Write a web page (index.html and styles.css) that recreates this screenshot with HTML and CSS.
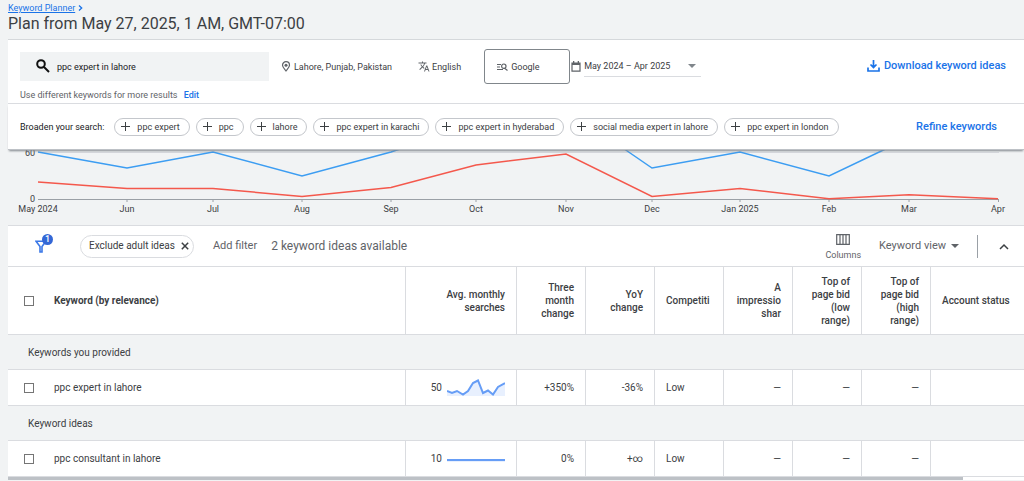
FILE: index.html
```html
<!DOCTYPE html>
<html lang="en">
<head>
<meta charset="utf-8">
<title>Keyword Planner</title>
<link rel="stylesheet" href="styles.css">
</head>
<body>
<header class="page-header">
  <nav class="breadcrumb"><a href="#">Keyword Planner</a><svg width="5" height="8" viewBox="0 0 5 8"><path d="M1 1.500 3.700 4 1 6.500"/></svg></nav>
  <h1>Plan from May 27, 2025, 1 AM, GMT-07:00</h1>
</header>
<main>
  <section class="search-panel">
    <div class="search-row">
      <label class="search-box">
        <svg width="14" height="14" viewBox="0 0 14 14"><circle cx="5" cy="5" r="3.8"/><path d="m8 8 5 5"/></svg>
        <input type="text" value="ppc expert in lahore" aria-label="Keywords">
      </label>
      <button class="setting location"><svg width="10" height="11" viewBox="0 0 10 11"><path class="line" d="M5 10C3 7.500 1.500 6 1.500 4.200a3.500 3.500 0 0 1 7 0C8.500 6 7 7.500 5 10Z"/><circle cx="5" cy="4.200" r="1.500"/></svg>Lahore, Punjab, Pakistan</button>
      <button class="setting language"><svg width="12" height="11" viewBox="0 0 24 22"><path d="m12.900 14.100-2.500-2.500c1.700-1.900 3-4.200 3.700-6.500H17V3h-7V1H8v2H1v2h11.200c-.7 1.900-1.700 3.800-3.200 5.400-.9-1-1.700-2.200-2.300-3.400h-2c.7 1.600 1.700 3.200 3 4.600l-5.100 5L4 18l5-5 3.100 3.100zM18.500 9h-2L12 21h2l1.100-3h4.800l1.100 3h2zm-2.600 7 1.600-4.300L19.100 16z"/></svg>English</button>
      <button class="setting network"><svg width="11" height="8" viewBox="0 0 11 8"><path class="line" d="M0 1.500h4M0 4h3M0 6.500h6M8 5.500 10.500 7.500"/><circle class="line" cx="6.800" cy="3.200" r="2.200"/></svg>Google</button>
      <button class="setting dates"><svg width="10" height="11" viewBox="0 0 10 11"><path class="line" d="M1 2.200h8v7.900H1z"/><path d="M1 2h8v2H1zM2 0h1.300v2H2zM6.700 0H8v2H6.700z"/></svg><span class="date-value">May 2024 – Apr 2025<i class="caret"></i></span></button>
      <button class="link-button download"><svg width="13" height="12" viewBox="0 0 13 12"><path d="M6.500 0v7M3.500 4.500l3 3 3-3M1 7.500V11h11V7.500"/></svg>Download keyword ideas</button>
    </div>
    <p class="hint">Use different keywords for more results <a href="#">Edit</a></p>
  </section>
  <section class="broaden">
    <span class="broaden-label">Broaden your search:</span>
    <div class="chips">
      <button class="chip"><i class="plus"></i>ppc expert</button>
      <button class="chip"><i class="plus"></i>ppc</button>
      <button class="chip"><i class="plus"></i>lahore</button>
      <button class="chip"><i class="plus"></i>ppc expert in karachi</button>
      <button class="chip"><i class="plus"></i>ppc expert in hyderabad</button>
      <button class="chip"><i class="plus"></i>social media expert in lahore</button>
      <button class="chip"><i class="plus"></i>ppc expert in london</button>
    </div>
    <button class="link-button refine">Refine keywords</button>
  </section>
  <svg class="chart" viewBox="8 150 1016 75" role="img" aria-label="Search volume trends">
    <path class="grid" d="M38 152.500H999"/>
    <path class="axis" d="M38 199.500H999M127 199v3M213 199v3M302 199v3M391 199v3M476 199v3M566 199v3M652 199v3M740 199v3M829 199v3M909 199v3M998.500 199v3"/>
    <path class="series blue" d="M38 152 127 168 213 152 302 176 391 152 415 144M617 144 652 168 740 152 829 176 896 144"/>
    <path class="series red" d="M38 182 127 188.500H213L302 196.500 391 187.500 476 165 566 154 652 196.500 740 188.500 829 198.800 909 194.800 998 198.800"/>
    <g class="y-labels"><text x="35" y="156">60</text><text x="35" y="202">0</text></g>
    <g class="x-labels"><text x="38" y="212">May 2024</text><text x="127" y="212">Jun</text><text x="213" y="212">Jul</text><text x="302" y="212">Aug</text><text x="391" y="212">Sep</text><text x="476" y="212">Oct</text><text x="566" y="212">Nov</text><text x="652" y="212">Dec</text><text x="740" y="212">Jan 2025</text><text x="829" y="212">Feb</text><text x="909" y="212">Mar</text><text x="998" y="212">Apr</text></g>
  </svg>
  <section class="toolbar">
    <button class="filter" aria-label="Filters, 1 applied"><svg width="12" height="13" viewBox="0 0 12 13"><path d="M1 1.200h10L7 6.500V12H5V6.500Z"/></svg><span class="badge">1</span></button>
    <button class="filter-chip">Exclude adult ideas<svg width="8" height="8" viewBox="0 0 8 8"><path d="m.8.8 6.400 6.400M7.200.8.8 7.200"/></svg></button>
    <button class="add-filter">Add filter</button>
    <span class="count">2 keyword ideas available</span>
    <button class="columns"><svg width="14" height="11" viewBox="0 0 14 11"><path d="M.7.7h12.600v9.600H.7zM4 1v9M7 1v9M10 1v9"/></svg>Columns</button>
    <button class="view">Keyword view<i class="caret"></i></button>
    <span class="divider"></span>
    <button class="collapse" aria-label="Collapse"><svg width="10" height="7" viewBox="0 0 10 7"><path d="m1 6 4-4 4 4"/></svg></button>
  </section>
  <table>
    <colgroup><col><col class="col-avg"><col class="col-std"><col class="col-std"><col class="col-std"><col class="col-std"><col class="col-std"><col class="col-std"><col class="col-status"></colgroup>
    <thead>
      <tr><th class="keyword"><label><input type="checkbox">Keyword (by relevance)</label></th><th>Avg. monthly searches</th><th>Three month change</th><th>YoY change</th><th class="left">Competiti</th><th>A<br>impressio<br>shar</th><th>Top of page bid (low range)</th><th>Top of page bid (high range)</th><th class="left">Account status</th></tr>
    </thead>
    <tbody>
      <tr class="group"><th colspan="9">Keywords you provided</th></tr>
      <tr><td class="keyword"><label><input type="checkbox">ppc expert in lahore</label></td><td><span class="trend">50<svg width="58" height="18" viewBox="0 0 58 18"><path class="fill" d="M0 12 5 14 10 12 16 15.500 21 12 26 4 31 1.500 36 14 41 11.500 46 15.500 51 8 58 4V17H0Z"/><path class="spark" d="M0 12 5 14 10 12 16 15.500 21 12 26 4 31 1.500 36 14 41 11.500 46 15.500 51 8 58 4"/></svg></span></td><td>+350%</td><td>-36%</td><td class="left">Low</td><td>—</td><td>—</td><td>—</td><td></td></tr>
      <tr class="group"><th colspan="9">Keyword ideas</th></tr>
      <tr><td class="keyword"><label><input type="checkbox">ppc consultant in lahore</label></td><td><span class="trend">10<svg width="58" height="18" viewBox="0 0 58 18"><path class="fill" d="M0 10h58v2H0Z"/><path class="spark" d="M0 10h58"/></svg></span></td><td>0%</td><td>+∞</td><td class="left">Low</td><td>—</td><td>—</td><td>—</td><td></td></tr>
    </tbody>
  </table>
  <div class="scroll-track"><div class="scroll-thumb"></div></div>
</main>
</body>
</html>
```
FILE: styles.css
```css
* { box-sizing: border-box; }
body { margin: 0; padding-left: 8px; background: #f1f3f4; color: #3c4043; font: 10px/12px Roboto, "Liberation Sans", sans-serif; overflow-x: hidden; }
button { border: 0; padding: 0; background: none; color: inherit; font: inherit; display: flex; align-items: center; white-space: nowrap; cursor: pointer; }
svg { flex: none; display: block; }
a { color: #1a73e8; }

.page-header { height: 39px; padding-top: 2px; }
.breadcrumb { display: flex; align-items: center; gap: 3px; font-size: 9px; line-height: 12px; }
.breadcrumb svg { fill: none; stroke: #1a73e8; stroke-width: 1.3; }
h1 { margin: 0; color: #3c4043; font: 400 16px/20px Roboto, sans-serif; }

.search-panel { height: 65px; padding: 11px 18px 0 12px; background: #fff; border-top: 1px solid #d5d8db; border-bottom: 1px solid #dadce0; font-size: 9px; }
.search-row { display: flex; align-items: center; height: 30px; }
.search-box { display: flex; align-items: center; gap: 7px; width: 249px; height: 29px; padding-left: 16px; background: #f1f3f4; }
.search-box svg { fill: none; stroke: #111; stroke-width: 2; }
.search-box input { flex: 1; min-width: 0; padding: 1px 0 0; border: 0; outline: 0; background: none; color: #202124; font: inherit; }
.setting { gap: 3px; padding-top: 1px; color: #3c4043; }
.setting svg { fill: #5f6368; }
.setting .line { fill: none; stroke: #5f6368; stroke-width: 1.2; }
.location { margin-left: 12px; }
.language { margin-left: 26px; gap: 2px; }
.network { width: 86px; height: 35px; margin-left: 23px; padding-left: 12px; border: 1px solid #80868b; border-radius: 3px; }
.dates { margin-left: 1px; }
.date-value { display: flex; align-items: center; gap: 18px; padding: 4px 5px 4px 0; border-bottom: 1px solid #dadce0; }
.caret { border: 4px solid transparent; border-top-color: #80868b; border-bottom: 0; }
.link-button { color: #1a73e8; font: 500 11px/14px Roboto, sans-serif; }
.download { gap: 4px; margin-left: auto; }
.download svg { fill: none; stroke: #1a73e8; stroke-width: 1.7; }
.hint { margin: 8px 0 0; color: #5f6368; }
.hint a { margin-left: 4px; font-weight: 500; text-decoration: none; }

.broaden { position: relative; z-index: 1; display: flex; align-items: center; height: 46px; padding: 0 27px 0 12px; background: #fff; border-bottom: 1px solid #bdc1c6; box-shadow: 0 2px 2px -1px #80868b; font-size: 9px; }
.broaden-label { color: #202124; }
.chips { display: flex; gap: 6px; margin-left: 10px; }
.chip { gap: 7px; height: 18px; padding: 0 9px 0 6px; border: 1px solid #c4c7cc; border-radius: 9px; color: #3c4043; }
.plus { width: 9px; height: 9px; background: linear-gradient(#3c4043, #3c4043) center / 9px 1px no-repeat, linear-gradient(#3c4043, #3c4043) center / 1px 9px no-repeat; }
.refine { margin-left: auto; }

.chart { width: 100%; height: auto; overflow: visible; font-size: 9px; }
.chart text { fill: #3c4043; }
.grid { stroke: #dadce0; }
.axis { stroke: #9aa0a6; }
.series { fill: none; stroke-width: 1.5; }
.blue { stroke: #3c9df2; }
.red { stroke: #f4584c; }
.x-labels { text-anchor: middle; }
.y-labels { text-anchor: end; }

.toolbar { display: flex; align-items: center; height: 42px; padding: 0 15px 0 27px; background: #fff; border-top: 1px solid #dadce0; border-bottom: 1px solid #dadce0; color: #5f6368; font-size: 11px; }
.filter { position: relative; width: 18px; height: 18px; }
.filter svg { fill: none; stroke: #3b78e7; stroke-width: 1.6; }
.badge { position: absolute; left: 7px; top: -3px; width: 11px; height: 11px; border-radius: 50%; background: #3367d6; color: #fff; font: 500 9px/11px Roboto, sans-serif; }
.filter-chip { gap: 6px; height: 23px; margin-left: 27px; padding: 0 4px 0 8px; border: 1px solid #dadce0; border-radius: 12px; color: #3c4043; font-size: 10px; }
.filter-chip svg, .collapse svg { fill: none; stroke: #3c4043; stroke-width: 1.5; }
.add-filter { margin-left: 19px; }
.count { margin-left: 14px; font-size: 12px; white-space: nowrap; }
.columns { flex-direction: column; gap: 4px; margin-left: auto; padding-top: 2px; font-size: 9px; }
.columns svg { fill: none; stroke: #5f6368; stroke-width: 1.2; }
.view { gap: 5px; margin-left: 18px; }
.view .caret { border-top-color: #5f6368; }
.divider { width: 1px; height: 23px; margin: 0 21px 0 18px; background: #9aa0a6; }

table { width: 100%; table-layout: fixed; border-collapse: separate; border-spacing: 0; background: #fff; }
.col-avg { width: 111px; }
.col-std { width: 69px; }
.col-status { width: 94px; }
th, td { padding: 0 11px; border-bottom: 1px solid #dadce0; text-align: right; overflow: hidden; }
th + th, td + td { border-left: 1px solid #dadce0; }
th { font-weight: 500; line-height: 13px; }
td { font-size: 10px; }
thead th { height: 68px; }
td { height: 36px; }
thead .left { white-space: nowrap; }
.left, .keyword { text-align: left; }
.keyword { padding-left: 16px; }
thead .keyword { font-weight: 700; }
.keyword label { display: flex; align-items: center; gap: 20px; }
input[type="checkbox"] { appearance: none; width: 10px; height: 10px; margin: 0; border: 1px solid #757575; background: #fff; }
.group th { height: 35px; padding-left: 20px; background: #f1f3f4; text-align: left; font-weight: 400; }
.trend { display: flex; align-items: center; justify-content: flex-end; gap: 5px; }
.fill { fill: #e8f0fe; }
.spark { fill: none; stroke: #669df6; stroke-width: 2; }
.scroll-track { height: 3px; background: #fff; }
.scroll-thumb { width: 94%; height: 3px; background: #bdc1c6; }
```
